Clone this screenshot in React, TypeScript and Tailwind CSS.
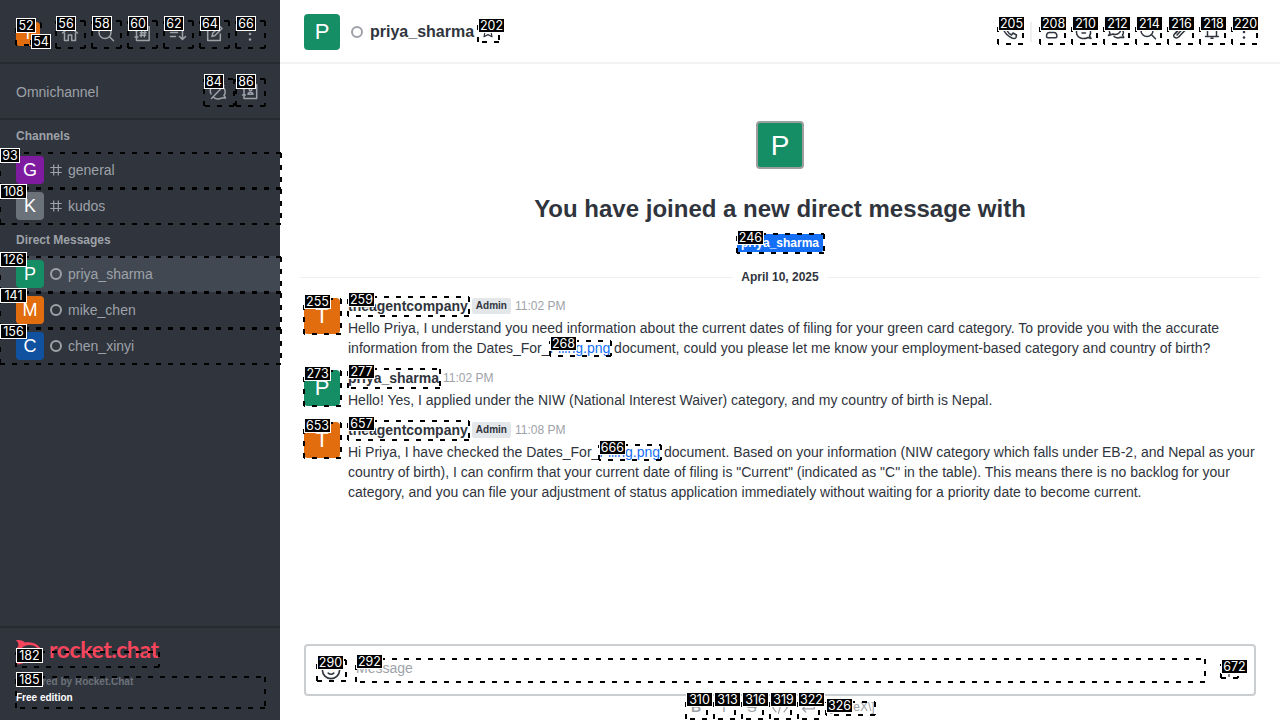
import type { ReactNode } from "react";

const Icon = ({ children, size = 20, className = "" }: { children: ReactNode; size?: number; className?: string }) => (
  <svg
    width={size}
    height={size}
    viewBox="0 0 20 20"
    fill="none"
    stroke="currentColor"
    strokeWidth="1.5"
    strokeLinecap="round"
    strokeLinejoin="round"
    className={"shrink-0 " + className}
  >
    {children}
  </svg>
);

const HomeIcon = () => (
  <Icon>
    <path d="M2.500 9 10 2.800 17.500 9M4.500 9v7.500h3.800V11h3.400v5.500h3.800V9" />
  </Icon>
);
const SearchIcon = () => (
  <Icon>
    <circle cx="9" cy="8.500" r="6" />
    <path d="m13.300 12.500 4.200 4.200" />
  </Icon>
);
const DirectoryIcon = () => (
  <Icon>
    <path d="M4.500 2.800h12.700v13.700H4.500zM3 6.500h3M3 13h3M9.700 7.200l-.6 5.600M12.900 7.200l-.6 5.600M8.300 8.800h5.700M8 11.200h5.700" />
  </Icon>
);
const SortIcon = () => (
  <Icon>
    <path d="M2.500 4h8M2.500 8.500h7M2.500 12.500h5M14.500 3.500v12M11.500 12.500l3 3 3-3" />
  </Icon>
);
const EditIcon = () => (
  <Icon>
    <path d="M10.500 3.800H3.700v12.700h12.600V10M8 12.500l.7-3.300 7-7L18 4.500l-7 7zM13.800 4.300l2.200 2.200" />
  </Icon>
);
const KebabIcon = () => (
  <Icon>
    <g fill="currentColor" stroke="none">
      <circle cx="10" cy="4.500" r="1.300" />
      <circle cx="10" cy="10" r="1.300" />
      <circle cx="10" cy="15.500" r="1.300" />
    </g>
  </Icon>
);
const ChatOffIcon = () => (
  <Icon>
    <path d="M12 3.500a6.500 6.500 0 0 0-9 8.500M5.500 15.300c2 1.800 5.500 2 8.500.5M15.500 5.500c2 2.500 2.200 5.500.5 8l1.500 2.500H14M16 3.500l-12.500 13" />
  </Icon>
);
const ContactIcon = () => (
  <Icon>
    <path d="M4 2.800h12.700v13.700H4zM2.500 6.500h3M2.500 13h3" />
    <circle cx="10.500" cy="7.500" r="1.300" />
    <path d="M8 12.200c.3-2.500 4.700-2.500 5 0z" />
  </Icon>
);
const HashIcon = () => (
  <svg width="12" height="12" viewBox="0 0 12 12" fill="none" stroke="currentColor" strokeWidth="1.200">
    <path d="M3.700.5v11M8.300.5v11M.3 3.500h11.400M.3 8.500h11.400" />
  </svg>
);
const StatusRing = () => (
  <svg width="12" height="12" viewBox="0 0 12 12" fill="none" stroke="#9ea2a8" strokeWidth="2" className="shrink-0">
    <circle cx="6" cy="6" r="5" />
  </svg>
);

const Row = ({ letter, color, name, channel, active }: { letter: string; color: string; name: string; channel?: boolean; active?: boolean }) => (
  <div className={"flex h-9 items-center pl-4 " + (active ? "bg-[#414852]" : "")}>
    <div className={"flex size-7 items-center justify-center rounded pt-px text-[18px] text-white " + color}>{letter}</div>
    <div className="ml-1.5 mr-1.5 flex">{channel ? <HashIcon /> : <StatusRing />}</div>
    <span>{name}</span>
  </div>
);

const SectionTitle = ({ children }: { children: ReactNode }) => (
  <div className="flex h-8 items-center pl-4 text-xs font-bold">{children}</div>
);

const Sidebar = () => (
  <aside className="flex w-[280px] shrink-0 flex-col bg-[#2f343d] text-sm text-[#9ea2a8]">
    <div className="flex h-16 items-center gap-4 border-b-2 border-[#262a31] pt-1.5 pl-4">
      <div className="flex size-6 items-center justify-center rounded bg-[#e26d0e] text-base text-white">T</div>
      <div className="ml-1 flex gap-4">
        <HomeIcon />
        <SearchIcon />
        <DirectoryIcon />
        <SortIcon />
        <EditIcon />
        <KebabIcon />
      </div>
    </div>
    <div className="flex h-14 items-center border-b-2 border-[#262a31] pt-0.5 pl-4">
      <span className="grow">Omnichannel</span>
      <div className="flex gap-3 pr-5">
        <ChatOffIcon />
        <ContactIcon />
      </div>
    </div>
    <SectionTitle>Channels</SectionTitle>
    <Row letter="G" color="bg-[#7f1b9f]" name="general" channel />
    <Row letter="K" color="bg-[#6c727a]" name="kudos" channel />
    <SectionTitle>Direct Messages</SectionTitle>
    <Row letter="P" color="bg-[#158d65]" name="priya_sharma" active />
    <Row letter="M" color="bg-[#e26d0e]" name="mike_chen" />
    <Row letter="C" color="bg-[#1051a0]" name="chen_xinyi" />
    <div className="mt-auto h-[94px] border-t-2 border-[#262a31] pt-2.5 pl-4">
      <div className="flex h-[26px] items-start text-[#f5455c]">
        <svg width="28" height="26" viewBox="0 0 28 26" fill="none" className="mt-0.5 shrink-0">
          <path d="M0 0c4-.3 7 .8 9 2.500 8-1.500 15 2 17 9.500-2 8-9 11.500-17 10-2 1.700-5 2.600-9 2.300 2-2 3-4 2.200-6.500-3-3.600-3-8 0-11.500C3 4 2 2 0 0z" fill="currentColor" />
          <ellipse cx="13.500" cy="12" rx="9.500" ry="7" fill="#2f343d" />
        </svg>
        <svg width="120" height="26" className="ml-1 overflow-visible">
          <text x="1" y="20" fill="currentColor" fontFamily="Lato" fontWeight="700" fontSize="23" textLength="110" lengthAdjust="spacing">
            rocket.chat
          </text>
        </svg>
      </div>
      <div className="mt-2.5 text-[10px] leading-4 font-bold text-[#6c727a]">Powered by Rocket.Chat</div>
      <div className="text-[10px] leading-4 font-bold text-white">Free edition</div>
    </div>
  </aside>
);

const Header = () => (
  <header className="flex h-16 shrink-0 items-center border-b-2 border-[#f2f3f5] pt-0.5 pr-[26px] pl-6 text-[#2f343d]">
    <div className="flex size-9 items-center justify-center rounded bg-[#158d65] text-[22px] text-white">P</div>
    <div className="ml-[11px] flex">
      <StatusRing />
    </div>
    <span className="ml-[7px] text-base font-bold">priya_sharma</span>
    <Icon size={16} className="ml-1.5">
      <path d="m10 1 2.400 5 5.600.7-4.100 3.800 1.100 5.500-5-2.700L5 16l1.100-5.500L2 6.700 7.600 6z" />
    </Icon>
    <div className="ml-auto flex items-center">
      <Icon>
        <path d="M4.500 3.500 7 3l2 4-2 1.500c1 2 2.500 3.500 4.500 4.500l1.500-2 3.500 2-.5 2.500c-.5 1-2.500 1.200-4 .5C8 14 5 11.500 3.500 7.500c-.6-1.500-.3-3.200 1-4z" />
      </Icon>
      <div className="mx-2.5 h-5 w-0.5 bg-[#eeeff1]" />
      <div className="flex gap-3">
        <Icon>
          <circle cx="9.700" cy="5.500" r="2.700" />
          <path d="M7.500 10.500h4.400c2 0 3 1.800 3 3.800 0 1-.5 1.500-1.500 1.500H6c-1 0-1.500-.5-1.500-1.500 0-2 1-3.800 3-3.800z" />
        </Icon>
        <Icon>
          <path d="M14 15.500c-5 2.500-11 .5-11.500-5C2 5 8 1.500 13 4c4 2.500 4.500 7 2.500 10l1.500 2.500zM8 11h3.500" />
        </Icon>
        <Icon>
          <path d="M4 11.500c-2-4 1-8 5.500-8 4 0 6 3 5 5.500-1 3-4.500 4-7.500 3L2.500 13.500zM15.500 7.500c2.500 1.500 2.300 3.500 1 5.500l1.300 2.500-3.300-.3c-2 1.300-5 .8-6.500-1" />
        </Icon>
        <SearchIcon />
        <Icon>
          <path d="m4.500 12 6.500-7.500c3-3 7 .5 4.200 3.500L9 14.800c-3 2.700-7 0-4.500-2.800zM7 13l6-6.500M9 14.500 15.500 8M5.500 11.500l6-6.500" />
        </Icon>
        <Icon>
          <path d="M3.500 14.500h12.800M5.500 14.500V8c0-6.500 9-6.500 9 0v6.500M9 16.300h2" />
        </Icon>
        <KebabIcon />
      </div>
    </div>
  </header>
);

type MessageProps = { letter: string; color: string; name: string; admin?: boolean; time: string; children: ReactNode };

const Message = ({ letter, color, name, admin, time, children }: MessageProps) => (
  <article className="flex pt-1 pb-[6px] pl-6">
    <div className={"mt-0.5 flex size-9 shrink-0 items-center justify-center rounded text-[22px] text-white " + color}>{letter}</div>
    <div className="ml-2 whitespace-nowrap">
      <div className="flex h-5 items-center">
        <span className="font-bold">{name}</span>
        {admin && <span className="ml-1 rounded-xs bg-[#e4e7ea] px-1 text-[10px] leading-4 font-bold">Admin</span>}
        <span className="ml-1 text-xs text-[#9ea2a8]">{time}</span>
      </div>
      <p className="mt-0.5 leading-5">{children}</p>
    </div>
  </article>
);

const FileLink = () => <a className="text-[#156ff5]">Filing.png</a>;

const Composer = () => (
  <div className="mt-auto h-[76px] shrink-0 px-6">
    <div className="flex h-[52px] items-center rounded border-2 border-[#cbced1] pl-3.5 text-[#2f343d]">
      <Icon size={22}>
        <circle cx="10" cy="10" r="7.800" />
        <path d="M7.500 12.800c1.300 1.200 3.700 1.200 5 0M7.500 7.500v.5M12.500 7.500v.5" />
      </Icon>
      <span className="mb-1 ml-3.5 grow text-sm text-[#9ea2a8]">Message</span>
      <Icon size={16} className="mt-1 mr-[17px]">
        <path d="M10 3.500v12M4 9.500h12" />
      </Icon>
    </div>
    <div className="flex h-[22px] items-center pl-[378px] text-sm text-[#9ea2a8]">
      <span className="w-7 text-center font-bold">B</span>
      <span className="w-7 text-center">I</span>
      <span className="w-7 text-center line-through">S</span>
      <span className="flex w-7 justify-center">
        <Icon size={16}>
          <path d="m5 6-4 5 4 5M15 6l4 5-4 5M12 4 8 18" />
        </Icon>
      </span>
      <span className="flex w-7 justify-center">
        <Icon size={18}>
          <path d="M17 5v7H4M7.500 8.500 4 12l3.500 3.500" />
        </Icon>
      </span>
      <span className="ml-1 text-xs">\[KaTeX\]</span>
    </div>
  </div>
);

/* [label, left, top, right, bottom, label y] */
const marks: [number, number, number, number, number, number][] = [
  [52, 16, 23, 41, 45, 18],
  [56, 56, 21, 85, 48, 16],
  [58, 92, 21, 121, 48, 16],
  [60, 128, 21, 157, 48, 16],
  [62, 164, 21, 193, 48, 16],
  [64, 200, 21, 229, 48, 16],
  [66, 236, 21, 265, 48, 16],
  [54, 31, 39, 42, 45, 34],
  [84, 204, 79, 234, 106, 74],
  [86, 236, 79, 265, 106, 74],
  [93, 0, 153, 281, 188, 148],
  [108, 0, 189, 281, 224, 184],
  [126, 0, 257, 281, 292, 252],
  [141, 0, 293, 281, 328, 288],
  [156, 0, 329, 281, 364, 324],
  [182, 16, 652, 159, 667, 648],
  [185, 16, 677, 265, 708, 672],
  [202, 478, 23, 499, 42, 18],
  [205, 998, 21, 1023, 44, 16],
  [208, 1040, 21, 1065, 44, 16],
  [210, 1072, 21, 1097, 44, 16],
  [212, 1104, 21, 1129, 44, 16],
  [214, 1136, 21, 1161, 44, 16],
  [216, 1168, 21, 1193, 44, 16],
  [218, 1200, 21, 1225, 44, 16],
  [220, 1232, 21, 1257, 44, 16],
  [246, 737, 234, 824, 253, 230],
  [255, 304, 299, 341, 334, 294],
  [259, 348, 297, 469, 316, 292],
  [268, 550, 341, 611, 356, 336],
  [273, 304, 371, 341, 406, 366],
  [277, 348, 369, 440, 388, 364],
  [653, 304, 423, 341, 458, 418],
  [657, 348, 421, 469, 440, 416],
  [666, 599, 445, 661, 460, 440],
  [290, 317, 660, 346, 681, 655],
  [292, 356, 659, 1205, 682, 654],
  [672, 1221, 664, 1238, 678, 659],
  [310, 686, 698, 707, 719, 692],
  [313, 714, 698, 735, 719, 692],
  [316, 742, 698, 763, 719, 692],
  [319, 770, 698, 791, 719, 692],
  [322, 798, 698, 819, 719, 692],
  [326, 826, 702, 875, 715, 698],
];

const MarkLayer = () => (
  <svg className="pointer-events-none absolute inset-0" width="1280" height="720" shapeRendering="crispEdges">
    {marks.map(([id, l, t, r, b]) => (
      <path
        key={id}
        d={`M${l} ${t}H${r}M${r} ${t}V${b}M${r} ${b}H${l}M${l} ${b}V${t}`}
        stroke="#000"
        strokeWidth="2"
        strokeDasharray="5 7"
        fill="none"
      />
    ))}
    {marks.map(([id, l, , , , y]) => (
      <g key={id}>
        <rect x={l} y={y} width={id > 99 ? 27 : 20} height="15" fill="#fff" />
        <rect x={l + 1} y={y + 1} width={id > 99 ? 25 : 18} height="13" fill="#000" />
        <text x={l + (id > 99 ? 13.5 : 10)} y={y + 12} fill="#fff" fontFamily="Inter" fontSize="12.5" textAnchor="middle">
          {id}
        </text>
      </g>
    ))}
  </svg>
);

export default function App() {
  return (
    <div className="relative flex h-[720px] w-[1280px] overflow-hidden bg-white font-['Liberation_Sans',sans-serif] text-sm text-[#2f343d]">
      <Sidebar />
      <main className="flex min-w-0 grow flex-col">
        <Header />
        <section className="flex flex-col items-center pt-[57px]">
          <div className="flex size-12 items-center justify-center rounded border-2 border-[#9e9e9e] bg-[#158d65] pt-0.5 text-[28px] text-white">P</div>
          <h1 className="mt-6 text-2xl leading-8 font-bold">You have joined a new direct message with</h1>
          <span className="mt-[9px] rounded-xs bg-[#156ff5] px-1 text-xs leading-[18px] font-bold text-white">priya_sharma</span>
        </section>
        <div className="mx-5 mt-[17px] mb-[7px] flex h-4 items-center gap-2 text-xs font-bold">
          <div className="h-px grow bg-[#eeeff1]" />
          April 10, 2025
          <div className="h-px grow bg-[#eeeff1]" />
        </div>
        <Message letter="T" color="bg-[#e26d0e]" name="theagentcompany" admin time="11:02 PM">
          Hello Priya, I understand you need information about the current dates of filing for your green card category. To provide you with the accurate
          <br />
          information from the Dates_For_<FileLink /> document, could you please let me know your employment-based category and country of birth?
        </Message>
        <Message letter="P" color="bg-[#158d65]" name="priya_sharma" time="11:02 PM">
          Hello! Yes, I applied under the NIW (National Interest Waiver) category, and my country of birth is Nepal.
        </Message>
        <Message letter="T" color="bg-[#e26d0e]" name="theagentcompany" admin time="11:08 PM">
          Hi Priya, I have checked the Dates_For_<FileLink /> document. Based on your information (NIW category which falls under EB-2, and Nepal as your
          <br />
          country of birth), I can confirm that your current date of filing is "Current" (indicated as "C" in the table). This means there is no backlog for your
          <br />
          category, and you can file your adjustment of status application immediately without waiting for a priority date to become current.
        </Message>
        <Composer />
      </main>
      <MarkLayer />
    </div>
  );
}
